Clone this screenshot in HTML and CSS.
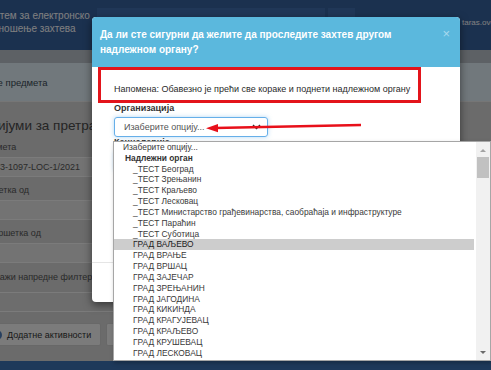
FILE: index.html
```html
<!DOCTYPE html>
<html lang="sr">
<head>
  <meta charset="UTF-8">
  <meta name="viewport" content="width=device-width, initial-scale=1.0">
  <title>Претраживање предмета</title>
  <link rel="stylesheet" href="styles.css">
</head>
<body>

  <!-- Page behind the dialog -->
  <div class="page">
    <header class="topbar">
      <div class="brand">Систем за електронско<br>подношење захтева</div>
      <nav class="nav">
        <span class="nav-item nav-wide"></span>
        <span class="nav-item nav-small"></span>
      </nav>
      <div class="user">taras.ovcharenko</div>
    </header>
    <div class="strip"></div>
    <div class="panel"><span class="panel-title">Претраживање предмета</span></div>

    <main class="content">
      <h2 class="criteria">Критеријуми за претрагу</h2>
      <div class="field">
        <div class="field-label">Број предмета</div>
        <div class="field-input">ROP-SUB-23-1097-LOC-1/2021</div>
      </div>
      <div class="field">
        <div class="field-label">Датум почетка од</div>
        <div class="field-input"></div>
      </div>
      <div class="field">
        <div class="field-label">Датум завршетка од</div>
        <div class="field-input"></div>
      </div>
      <label class="check"><span class="check-box"></span>Прикажи напредне филтере</label>
      <div class="field-input filler"></div>
      <div class="actions">
        <span class="btn"><span class="btn-icon"></span>Додатне активности</span>
        <span class="btn"><span class="btn-icon"></span>Штампа</span>
      </div>
    </main>
    <footer class="bottombar"></footer>
  </div>

  <div class="backdrop"></div>

  <!-- Dialog -->
  <div class="modal">
    <div class="modal-header">
      <h4 class="modal-title">Да ли сте сигурни да желите да проследите захтев другом надлежном органу?</h4>
      <span class="close">&times;</span>
    </div>
    <div class="modal-body">
      <div class="note">Напомена: Обавезно је прећи све кораке и поднети надлежном органу</div>
      <div class="form-label">Организација</div>
      <div class="select">
        <span>Изаберите опцију...</span>
        <svg class="chevron" width="9" height="6" viewBox="0 0 9 6"><polyline points="1,1 4.5,4.5 8,1" fill="none" stroke="#333" stroke-width="1.4"/></svg>
      </div>
      <div class="form-label">Канцеларија</div>
      <div class="select"></div>
    </div>
    <div class="modal-footer"></div>
  </div>

  <!-- Red annotation arrow -->
  <svg class="annotation" width="170" height="16" viewBox="0 0 170 16">
    <line x1="161" y1="7" x2="15" y2="10" stroke="#e8101a" stroke-width="2.4"/>
    <polygon points="6,10.3 18,6 18,14.2" fill="#e8101a"/>
  </svg>

  <!-- Open options list -->
  <div class="dropdown">
    <ul class="options">
      <li class="opt">Изаберите опцију...</li>
      <li class="opt group">Надлежни орган</li>
      <li class="opt child">_ТЕСТ Београд</li>
      <li class="opt child">_ТЕСТ Зрењанин</li>
      <li class="opt child">_ТЕСТ Краљево</li>
      <li class="opt child">_ТЕСТ Лесковац</li>
      <li class="opt child">_ТЕСТ Министарство грађевинарства, саобраћаја и инфраструктуре</li>
      <li class="opt child">_ТЕСТ Параћин</li>
      <li class="opt child">_ТЕСТ Суботица</li>
      <li class="opt child active">ГРАД ВАЉЕВО</li>
      <li class="opt child">ГРАД ВРАЊЕ</li>
      <li class="opt child">ГРАД ВРШАЦ</li>
      <li class="opt child">ГРАД ЗАЈЕЧАР</li>
      <li class="opt child">ГРАД ЗРЕЊАНИН</li>
      <li class="opt child">ГРАД ЈАГОДИНА</li>
      <li class="opt child">ГРАД КИКИНДА</li>
      <li class="opt child">ГРАД КРАГУЈЕВАЦ</li>
      <li class="opt child">ГРАД КРАЉЕВО</li>
      <li class="opt child">ГРАД КРУШЕВАЦ</li>
      <li class="opt child">ГРАД ЛЕСКОВАЦ</li>
      <li class="opt child">ГРАД ЛОЗНИЦА</li>
    </ul>
    <div class="scrollbar">
      <span class="arrow-up"></span>
      <span class="thumb"></span>
      <span class="arrow-down"></span>
    </div>
  </div>

</body>
</html>
```

FILE: styles.css
```css
* {
  box-sizing: border-box;
}
body {
  margin: 0;
  width: 491px;
  height: 370px;
  overflow: hidden;
  position: relative;
  font-family: "Liberation Sans", Arial, sans-serif;
  background-color: #d6d6d6;
  color: #333;
}

/* page behind the dialog */
.page {
  margin-left: -44px;
  width: 610px;
  height: 370px;
  display: flex;
  flex-direction: column;
}
.topbar {
  height: 50px;
  background-color: #36629f;
  display: flex;
  align-items: flex-start;
}
.brand {
  width: 141px;
  padding: 9px 0 0 26px;
  color: #fff;
  font-size: 10px;
  line-height: 13px;
  white-space: nowrap;
}
.nav {
  display: flex;
  gap: 3px;
  margin-top: 8px;
}
.nav-item {
  height: 30px;
  background-color: #416fae;
}
.nav-wide {
  width: 228px;
}
.nav-small {
  width: 27px;
}
.user {
  margin-left: auto;
  width: 104px;
  padding-top: 18px;
  color: #fff;
  font-size: 8px;
  white-space: nowrap;
}
.strip {
  height: 13px;
  background-color: #bac2ca;
}
.panel {
  height: 39px;
  background-color: #e2f1f8;
  border-bottom: 1px solid #ececec;
  display: flex;
  align-items: center;
  font-size: 9.5px;
  color: #3a4a55;
}
.panel-title {
  margin-left: -20px;
}
.content {
  flex: 1;
  padding-top: 14px;
}
.criteria {
  margin: 0 0 5px -2px;
  font-size: 13.5px;
  line-height: 20px;
  font-weight: normal;
  color: #4a4a4a;
  white-space: nowrap;
}
.field {
  margin-bottom: 7px;
}
.field-label {
  font-size: 9px;
  line-height: 12px;
  margin-bottom: 4px;
  color: #555;
}
.field-input {
  height: 20px;
  width: 560px;
  margin-left: -20px;
  padding-left: 14px;
  background-color: #e6e6e6;
  border: 1px solid #f6f6f6;
  font-size: 9px;
  line-height: 18px;
  color: #555;
}
.check {
  display: flex;
  align-items: center;
  gap: 5px;
  margin: 6px 0 0 8px;
  height: 14px;
  font-size: 9px;
  color: #555;
}
.check-box {
  width: 10px;
  height: 10px;
  border: 1px solid #aaa;
  background: #fff;
}
.filler {
  margin-top: 8px;
  background-color: #dadada;
}
.actions {
  display: flex;
  gap: 5px;
  margin: 11px 0 0 29px;
}
.btn {
  display: flex;
  align-items: center;
  gap: 5px;
  height: 23px;
  padding: 0 9px 0 6px;
  background-color: #f6f6f6;
  border: 1px solid #d0d0d0;
  border-radius: 2px;
  font-size: 9px;
  color: #333;
}
.btn-icon {
  width: 10px;
  height: 10px;
  border-radius: 50%;
  background-color: #4f7fbf;
}
.bottombar {
  height: 9px;
  background-color: #3c72b4;
}
.backdrop {
  position: absolute;
  inset: 0;
  background-color: rgba(0, 0, 0, 0.5);
}

/* dialog */
.modal {
  position: absolute;
  left: 92px;
  top: 17px;
  width: 368px;
  height: 285px;
  display: flex;
  flex-direction: column;
  background: #fff;
  border-radius: 4px;
  overflow: hidden;
  box-shadow: 0 3px 9px rgba(0, 0, 0, 0.5);
}
.modal-header {
  height: 50px;
  display: flex;
  align-items: flex-start;
  padding: 10px 10px 0 8px;
  background-color: #5bb8dd;
}
.modal-title {
  flex: 1;
  margin: 0;
  font-size: 10px;
  line-height: 15px;
  font-weight: bold;
  color: #fff;
}
.close {
  margin-top: 0;
  font-size: 13px;
  line-height: 13px;
  color: #a7d9ee;
}
.modal-body {
  flex: 1;
  padding: 0 6px;
}
.note {
  width: 323px;
  height: 36px;
  padding: 13px 0 0 13px;
  border: 3px solid #e3141b;
  font-size: 9px;
  line-height: 12px;
  white-space: nowrap;
  color: #2a2a2a;
}
.form-label {
  margin-left: 16px;
  font-size: 9px;
  line-height: 10px;
  font-weight: bold;
  color: #333;
}
.select {
  display: flex;
  align-items: center;
  justify-content: space-between;
  margin: 4px 0 0 16px;
  width: 154px;
  height: 20px;
  padding: 0 6px 0 9px;
  border: 1px solid #66afe9;
  border-radius: 3px;
  box-shadow: 0 0 4px rgba(102, 175, 233, 0.5);
  font-size: 9px;
  color: #555;
}
.modal-footer {
  height: 40px;
  border-top: 1px solid #e5e5e5;
}

/* red arrow drawn over the dialog */
.annotation {
  position: absolute;
  left: 200px;
  top: 118px;
}

/* open options list */
.dropdown {
  position: absolute;
  left: 113px;
  top: 141px;
  width: 378px;
  height: 220px;
  display: flex;
  background: #fff;
  border: 1px solid #a6a6a6;
  box-shadow: 1px 2px 4px rgba(0, 0, 0, 0.25);
}
.options {
  flex: 1;
  margin: 0;
  padding: 0 2px 0 0;
  list-style: none;
  overflow: hidden;
}
.opt {
  height: 10.84px;
  line-height: 10.84px;
  padding-left: 9px;
  font-size: 8.4px;
  color: #3a3a3a;
  white-space: nowrap;
}
.opt.group {
  padding-left: 11px;
  font-weight: bold;
  color: #333;
}
.opt.child {
  padding-left: 19px;
}
.opt.active {
  background-color: #cdcdcd;
  color: #222;
}
.scrollbar {
  width: 14px;
  position: relative;
  background-color: #f1f1f1;
}
.arrow-up, .arrow-down {
  position: absolute;
  left: 4px;
  width: 0;
  height: 0;
  border-left: 3px solid transparent;
  border-right: 3px solid transparent;
}
.arrow-up {
  top: 7px;
  border-bottom: 3px solid #a3a3a3;
}
.arrow-down {
  bottom: 6px;
  border-top: 3px solid #6a6a6a;
}
.thumb {
  position: absolute;
  left: 1px;
  top: 15px;
  width: 12px;
  height: 21px;
  background-color: #c1c1c1;
}
```
